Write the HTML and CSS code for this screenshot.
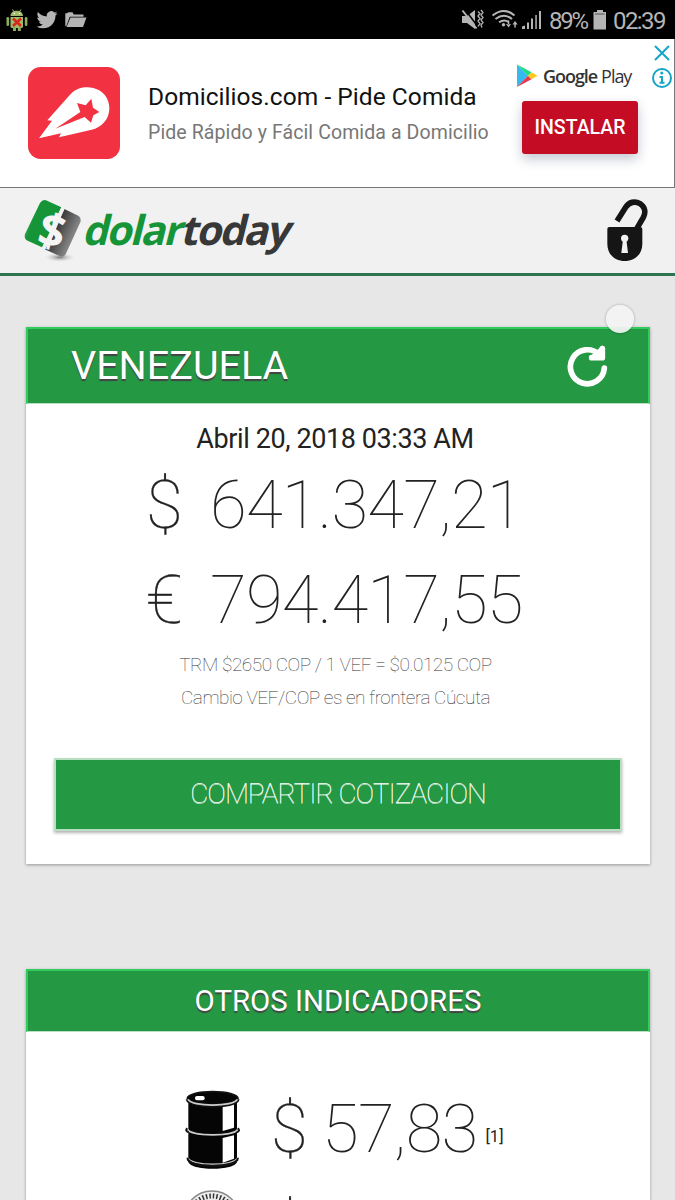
FILE: index.html
```html
<!DOCTYPE html>
<html lang="es">
<head>
    <meta charset="UTF-8">
    <meta name="viewport" content="width=device-width, initial-scale=1.0">
    <title>DolarToday</title>
    <link rel="stylesheet" href="styles.css">
</head>
<body>

    <!-- Status bar -->
    <div class="status">
        <svg class="status-left" width="90" height="39" viewBox="0 0 90 39">
            <g stroke="#a9be88" stroke-width="1"><path d="M12.500 9.500l2 3M21 9.500l-2 3"/></g>
            <path d="M10.500 16c0-7 12.500-7 12.500 0z" fill="#9dbb6b"/>
            <rect x="6.500" y="17" width="2.600" height="9" rx="1.300" fill="#8fae5c"/>
            <rect x="24.800" y="17" width="2.600" height="9" rx="1.300" fill="#8fae5c"/>
            <path d="M10.500 17H23v9.500q0 1.500-2 1.500h-8.500q-2 0-2-1.500z" fill="#9dbb6b"/>
            <path d="M13 27h3v4h-3zM17.800 27h3v4h-3z" fill="#8fae5c"/>
            <circle cx="14.300" cy="13.500" r=".8" fill="#fff"/><circle cx="19.500" cy="13.500" r=".8" fill="#fff"/>
            <path d="M13 18.500l8 7.500M21 18.500l-8 7.500" stroke="#d8261c" stroke-width="2.600"/>
            <path transform="translate(36.500 9.200) scale(.88)" fill="#b5b5b5" d="M23.950 4.570a10 10 0 0 1-2.820.770 4.960 4.960 0 0 0 2.160-2.720c-.950.550-2 .950-3.130 1.180a4.920 4.920 0 0 0-8.380 4.480C7.690 8.090 4.070 6.130 1.640 3.160a4.820 4.820 0 0 0-.670 2.470c0 1.710.870 3.210 2.190 4.100a4.900 4.900 0 0 1-2.230-.620v.060a4.920 4.920 0 0 0 3.950 4.830 5 5 0 0 1-2.210.080 4.940 4.940 0 0 0 4.600 3.420A9.870 9.870 0 0 1 0 19.540a14 14 0 0 0 7.550 2.210c9.050 0 14-7.500 14-13.990 0-.210 0-.420-.020-.630a9.940 9.940 0 0 0 2.460-2.550z"/>
            <path d="M65.300 26V13.300h2l.8-1h4.400l1.200 2.200h9.800v2.300H69.800L66.300 26z" fill="#b5b5b5"/>
            <path d="M70.500 17.500H86.500L83 27H66.500z" fill="#b5b5b5"/>
        </svg>
        <div class="status-right">
            <svg width="82" height="39" viewBox="461 0 82 39" fill="none">
                <path d="M462 16h5l8-6v19l-8-6h-5z" fill="#b5b5b5"/>
                <path d="M465 9.500l15 20" stroke="#000" stroke-width="1.500"/>
                <path d="M462.500 10.500l14 18" stroke="#b5b5b5" stroke-width="2"/>
                <path d="M478 11.500l2 2-2 2.500 2 2.500-2 2.500 2 2.500-2 3M481 10l2 2.500-2 2.500 2 2.500-2 2.500 2 2.500-2 2.500 1 2.500" stroke="#b5b5b5" stroke-width="1.300"/>
                <g stroke="#b5b5b5" stroke-width="2"><path d="M492.500 15.500q11.500-9 22 0M495.500 19q8.500-6.500 16.500 0M499 22.300q5-3.500 9.500-.5"/></g>
                <circle cx="503.500" cy="24.800" r="1.700" fill="#b5b5b5"/>
                <path d="M506 24l2.700 3.500 2.300-3.500zM507.800 20.500h1.500v4h-1.500zM512.500 24.500l2.500-3.500 2.700 3.500zM514.300 24h1.500v3.500h-1.500z" fill="#b5b5b5"/>
                <path d="M522 29v-2.500l3-1V29zM527 22.500h2V29h-2zM531 18.500h2V29h-2zM535.300 15h1.500v14h-1.500zM539 11h2v18h-2z" fill="#b5b5b5"/>
            </svg>
            <span class="battery">89%</span>
            <svg width="14" height="39" viewBox="593 0 14 39">
                <path d="M597 10h6v2h3v17.500h-12.500V12h3.500z" fill="#b5b5b5"/>
                <path d="M595 14h9.500" stroke="#555" stroke-width="1"/>
            </svg>
            <span class="clock">02:39</span>
        </div>
    </div>

    <!-- Ad banner -->
    <div class="ad">
        <svg class="ad-icon" width="92" height="92" viewBox="0 0 276 276">
            <rect width="276" height="276" rx="38" fill="#f23142"/>
            <path d="M33 214L72 161l-14-1 70-79c20-20 45-23 68-18 30 7 49 32 48 63-1 32-24 56-53 62L93 211l6-12z" fill="#fff"/>
            <path d="M82 185l75-50-10-27 26 7 17-20 5 27 19 13-18 10-7 22-19-17z" fill="#f23142"/>
        </svg>
        <div class="ad-text">
            <div class="ad-title">Domicilios.com - Pide Comida</div>
            <div class="ad-sub">Pide Rápido y Fácil Comida a Domicilio</div>
        </div>
        <div class="ad-action">
            <div class="play">
                <svg width="21" height="24" viewBox="0 0 21 24">
                    <path d="M0 .5V23L11 11.700z" fill="#35b9ee"/>
                    <path d="M0 .5l14.500 7.700-3.500 3.500z" fill="#1fdc83"/>
                    <path d="M0 23l14.500-7.800-3.500-3.500z" fill="#e6384c"/>
                    <path d="M14.500 8.200l6 3.500-6 3.500-3.500-3.500z" fill="#fcc91b"/>
                </svg>
                <span class="google">Google</span><span class="play-word">Play</span>
            </div>
            <div class="install">INSTALAR</div>
        </div>
        <svg class="ad-close" width="22" height="50" viewBox="0 0 22 50" fill="none" stroke="#14a5c7" stroke-width="2">
            <path d="M4 2l14 14M18 2L4 16"/>
            <circle cx="11" cy="34" r="9"/>
            <path d="M11 32v7M8.500 33H11M8.500 38.800h5" stroke-width="2"/>
            <circle cx="10.800" cy="29" r=".8" stroke-width="1.500"/>
        </svg>
    </div>

    <!-- App header -->
    <header class="top">
        <div class="logo">
            <svg width="60" height="66" viewBox="0 0 180 198">
                <defs>
                    <linearGradient id="green" x1="0" x2=".35" y2=".15"><stop offset="0" stop-color="#9ccdaa"/><stop offset="1" stop-color="#159438"/></linearGradient>
                    <linearGradient id="dark" x1=".5" x2="1" y2=".3"><stop offset="0" stop-color="#333"/><stop offset="1" stop-color="#8b8b8b"/></linearGradient>
                    <radialGradient id="shade"><stop offset="0" stop-color="#777"/><stop offset="1" stop-color="#f1f1f1" stop-opacity="0"/></radialGradient>
                </defs>
                <ellipse cx="107" cy="175" rx="50" ry="15" fill="url(#shade)"/>
                <path d="M66 4q-10-4-18 8L3 105q-4 14 8 20l43 20 10-20 20-39 28-61z" fill="url(#green)"/>
                <path d="M121 30l42 20q10 6 6 20l-44 96q-6 10-16 6l-47-21 24-37z" fill="url(#dark)"/>
                <path d="M117 27l-13 27M72 122l-13 27" stroke="#f1f1f1" stroke-width="11"/>
                <text class="logo-sign" x="86" y="145" text-anchor="middle" transform="rotate(14 86 90)">$</text>
            </svg>
            <span class="logo-name"><span class="logo-green">dolar</span><span class="logo-dark">today</span></span>
        </div>
        <svg class="lock" width="42" height="66" viewBox="0 0 126 198">
            <path d="M33 66l26-41c10-16 28-20 43-11 15 10 18 26 10 41L91 91" fill="none" stroke="#151515" stroke-width="17"/>
            <path d="M4 90q0-6 6-6h92q7 0 7 6v44c0 33-24 52-53 52S4 167 4 134z" fill="#151515"/>
            <circle cx="56" cy="118" r="11" fill="#f1f1f1"/>
            <path d="M51 122h10l5 40H46z" fill="#f1f1f1"/>
        </svg>
    </header>

    <main>
        <section class="card">
            <div class="card-head">
                <h1>VENEZUELA</h1>
                <svg width="42" height="42" viewBox="0 0 126 126" fill="none" stroke="#fff" stroke-width="17" stroke-linecap="round">
                    <path d="M112 69A51 51 0 1 1 97 29"/>
                    <path d="M106 11v27H74" stroke-linejoin="round"/>
                    <path d="M98 20v10H87z" fill="#fff"/>
                </svg>
                <span class="touch"></span>
            </div>
            <div class="card-body">
                <p class="date">Abril 20, 2018 03:33 AM</p>
                <p class="rate usd"><span class="sign">$</span>641.347,21</p>
                <p class="rate eur"><span class="sign">€</span>794.417,55</p>
                <p class="note">TRM $2650 COP / 1 VEF = $0.0125 COP</p>
                <p class="note">Cambio VEF/COP es en frontera Cúcuta</p>
                <div class="share">COMPARTIR COTIZACION</div>
            </div>
        </section>

        <section class="card others">
            <div class="card-head small"><h2>OTROS INDICADORES</h2></div>
            <div class="indicators">
                <div class="indicator">
                    <svg width="58" height="80" viewBox="0 0 174 240">
                        <path d="M10 24v190c0 30 146 30 146 0V24z" fill="#050505"/>
                        <path d="M113 48l34-10v75l-34 10zM113 144l34-8v70l-34 12z" fill="#fff"/>
                        <ellipse cx="83" cy="25" rx="76" ry="20" fill="#050505" stroke="#111" stroke-width="5"/>
                        <path d="M8 27c6 27 144 27 150 0" fill="none" stroke="#111" stroke-width="12"/>
                        <path d="M9 28c8 23 140 23 148 0M8 118c8 22 142 22 150 0M9 204c7 25 141 25 148 0" fill="none" stroke="#ccc" stroke-width="5"/>
                        <path d="M7 115c-6 5-3 10 4 12M158 115c7 5 4 10-3 12M8 203c-7 32 157 32 150 0" fill="none" stroke="#111" stroke-width="6"/>
                        <rect x="30" y="18" width="29" height="13" rx="6" fill="#fff"/>
                    </svg>
                    <p class="rate"><span class="sign">$</span>57,83</p>
                    <span class="ref">[1]</span>
                </div>
                <div class="indicator gold">
                    <svg width="58" height="58" viewBox="0 0 58 58" fill="none">
                        <circle cx="27" cy="29" r="28" fill="#eee" stroke="#888" stroke-width="1.500"/>
                        <circle cx="27" cy="29" r="23" stroke="#333" stroke-width="5" stroke-dasharray="1.500 2"/>
                    </svg>
                    <p class="rate"><span class="sign">$</span></p>
                </div>
            </div>
        </section>
    </main>

</body>
</html>
```
FILE: styles.css
```css
* {
    box-sizing: border-box;
}
body {
    margin: 0;
    height: 1200px;
    overflow: hidden;
    font-family: Roboto, sans-serif;
    background: #e7e7e7;
    color: #222;
}
h1, h2, p {
    margin: 0;
    font-weight: 400;
}
svg {
    display: block;
    flex: none;
}

/* status bar */
.status {
    height: 39px;
    display: flex;
    justify-content: space-between;
    background: #000;
    color: #b5b5b5;
}
.status-right {
    display: flex;
    padding-right: 9px;
    font-size: 24px;
    line-height: 42px;
    white-space: nowrap;
}
.battery {
    width: 44px;
    margin-left: 6px;
    letter-spacing: -2.2px;
}
.clock {
    width: 53px;
    margin-left: 6px;
    letter-spacing: -1.6px;
}

/* ad banner */
.ad {
    position: relative;
    height: 149px;
    display: flex;
    padding-left: 28px;
    background: #fff;
    border-right: 1px solid #777;
    border-bottom: 1px solid #777;
}
.ad-icon {
    margin-top: 28px;
}
.ad-text {
    flex: none;
    width: 402px;
    padding: 42px 0 0 28px;
    white-space: nowrap;
}
.ad-title {
    font-size: 24.500px;
    line-height: 32px;
    color: #111;
    letter-spacing: .05px;
}
.ad-sub {
    margin-top: 4px;
    font-size: 19.500px;
    line-height: 32px;
    color: #777;
    letter-spacing: .1px;
}
.ad-action {
    flex: none;
    width: 125px;
    padding-top: 24px;
}
.play {
    display: flex;
    align-items: center;
    height: 26px;
    margin-left: -5px;
    font-family: "Open Sans", sans-serif;
    font-size: 18px;
    letter-spacing: -1.05px;
    color: #333;
}
.google {
    margin-left: 5px;
    font-weight: 600;
}
.play-word {
    margin-left: 4px;
}
.install {
    width: 116px;
    height: 53px;
    margin-top: 12px;
    border-radius: 3px;
    background: #c40d24;
    box-shadow: 0 5px 12px rgba(60, 70, 110, .3);
    color: #fff;
    font-size: 19.500px;
    font-weight: 500;
    line-height: 54px;
    text-align: center;
}
.ad-close {
    position: absolute;
    top: 5px;
    right: 1px;
}

/* header */
.top {
    height: 88px;
    display: flex;
    justify-content: space-between;
    padding: 11px 27px 0 24px;
    background: #f1f1f1;
    border-bottom: 3px solid #2d7450;
}
.logo {
    display: flex;
}
.logo-name {
    font: bold 41px/60px "Open Sans", sans-serif;
    letter-spacing: -1.9px;
    transform: skewX(-14deg);
}
.logo-sign {
    font: bold 138px "Open Sans", sans-serif;
    fill: #f4f4f4;
}
.logo-green {
    color: #159438;
}
.logo-dark {
    color: #383838;
}

/* cards */
main {
    padding: 51px 25px 0 26px;
}
.card {
    background: #fff;
    box-shadow: 0 1px 3px rgba(0, 0, 0, .35);
}
.card-head {
    position: relative;
    height: 77px;
    display: flex;
    align-items: center;
    justify-content: space-between;
    padding: 0 39px 1px 43px;
    background: #259844;
    border: 2px solid #32cb5e;
    border-bottom: 1px solid #b8dfc1;
    color: #fff;
    text-shadow: 0 2px 1px #444;
}
.card-head h1 {
    font-size: 39.500px;
    line-height: 48px;
}
.touch {
    position: absolute;
    top: -24px;
    right: 14px;
    width: 28px;
    height: 28px;
    border-radius: 50%;
    background: rgba(244, 244, 244, .92);
    box-shadow: 0 0 3px rgba(0, 0, 0, .3);
}
.card-body {
    height: 460px;
    padding: 19px 30px 0;
    text-align: center;
}
.date {
    font-size: 27px;
    line-height: 32px;
    margin-right: 6px;
    letter-spacing: -.4px;
}
.rate {
    font-size: 67px;
    font-weight: 100;
    line-height: 95px;
    letter-spacing: -.75px;
    text-align: left;
    white-space: nowrap;
}
.usd, .eur {
    display: flex;
    padding-left: 90px;
}
.usd {
    margin-top: 3px;
}
.sign {
    -webkit-text-stroke: .3px #222;
}
.usd .sign, .eur .sign {
    width: 64px;
}
.note {
    font-size: 19px;
    font-weight: 100;
    line-height: 33px;
    color: #333;
    margin-right: 5px;
    letter-spacing: -.47px;
}
.share {
    height: 73px;
    margin: 44px -2px 0;
    border: 2px solid #b8dfc1;
    background: #259844;
    box-shadow: 0 2px 3px rgba(0, 0, 0, .3);
    color: #fff;
    font-size: 28px;
    font-weight: 100;
    line-height: 67px;
    letter-spacing: -1.05px;
    text-shadow: 0 1px 0 rgba(255, 255, 255, .7);
}

/* other indicators */
.others {
    margin-top: 105px;
}
.small {
    height: 63px;
    justify-content: center;
    padding: 0;
}
.small h2 {
    font-size: 29.400px;
}
.indicators {
    height: 168px;
    overflow: hidden;
    padding: 50px 0 0 159px;
}
.indicator {
    height: 95px;
    display: flex;
    align-items: center;
}
.indicator .rate {
    display: flex;
    margin-left: 28px;
}
.indicator .sign {
    width: 51px;
}
.ref {
    margin: 14px 0 0 8px;
    font-size: 16.500px;
}
.gold {
    align-items: flex-start;
    padding-top: 13px;
}
.gold .rate {
    margin-top: -9px;
}
```
